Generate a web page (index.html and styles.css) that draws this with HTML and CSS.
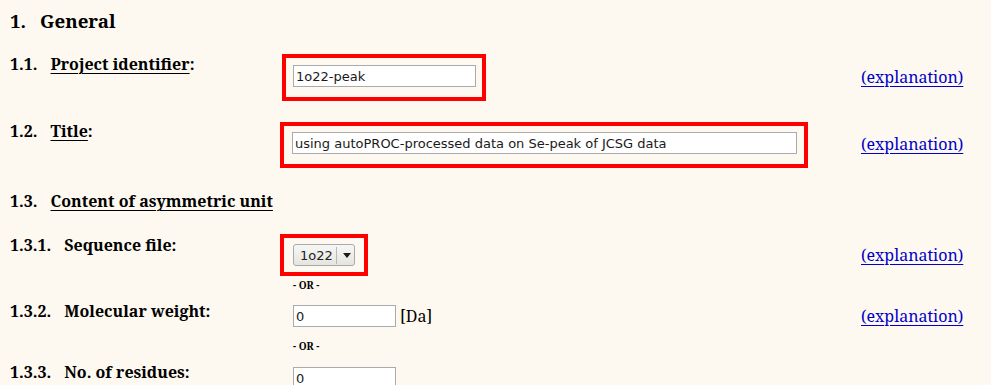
FILE: index.html
```html
<!DOCTYPE html>
<html lang="en">
<head>
<meta charset="utf-8">
<title>General</title>
<link rel="stylesheet" href="styles.css">
</head>
<body>
<h3 class="heading"><span class="num">1.</span><span>General</span></h3>

<div class="row r1">
  <div class="label"><span class="num">1.1.</span><span><u>Project identifier</u>:</span></div>
  <div class="value"><div class="box box1"><input class="field w183" type="text" value="1o22-peak"></div></div>
  <a class="expl" href="#">(explanation)</a>
</div>

<div class="row r2">
  <div class="label"><span class="num">1.2.</span><span><u>Title</u>:</span></div>
  <div class="value"><div class="box box2"><input class="field w505" type="text" value="using autoPROC-processed data on Se-peak of JCSG data"></div></div>
  <a class="expl" href="#">(explanation)</a>
</div>

<div class="row r3">
  <div class="label"><span class="num">1.3.</span><span><u>Content of asymmetric unit</u></span></div>
</div>

<div class="row r4">
  <div class="label"><span class="num">1.3.1.</span><span>Sequence file:</span></div>
  <div class="value">
    <div class="box box3">
      <div class="combo">
        <select class="combo-select"><option>1o22</option></select>
        <span class="combo-sep"></span>
        <span class="combo-arrow"></span>
      </div>
    </div>
  </div>
  <a class="expl" href="#">(explanation)</a>
</div>

<div class="row or1">
  <div></div>
  <div class="or">- OR -</div>
</div>

<div class="row r5">
  <div class="label"><span class="num">1.3.2.</span><span>Molecular weight:</span></div>
  <div class="value plain"><input class="field w103" type="text" value="0"><span class="unit">[Da]</span></div>
  <a class="expl" href="#">(explanation)</a>
</div>

<div class="row or2">
  <div></div>
  <div class="or">- OR -</div>
</div>

<div class="row r6">
  <div class="label"><span class="num">1.3.3.</span><span>No. of residues:</span></div>
  <div class="value plain"><input class="field w103" type="text" value="0"></div>
</div>
</body>
</html>
```
FILE: styles.css
```css
html, body {
  margin: 0;
  padding: 0;
}
body {
  background: #fdf9f0;
  color: #000;
  font-family: "Noto Serif", "DejaVu Serif", serif;
  font-size: 16px;
  padding-left: 10px;
  overflow: hidden;
  height: 385px;
}
.heading {
  margin: 0;
  padding-top: 9px;
  font-size: 18.72px;
  line-height: 24px;
  font-weight: bold;
  display: flex;
  gap: 14px;
}
.row {
  display: grid;
  grid-template-columns: 272px 579px max-content;
  align-items: start;
}
.label {
  font-weight: bold;
  line-height: 22px;
  display: flex;
  gap: 13px;
}
.label u {
  text-decoration: underline;
  text-decoration-thickness: 1px;
  text-underline-offset: 3px;
}
.expl {
  align-self: center;
  line-height: 22px;
  color: #0000c8;
  text-decoration: underline;
  text-decoration-thickness: 1px;
  text-underline-offset: 3px;
}
.r1 { margin-top: 20px; }
.r2 { margin-top: 19px; }
.r3 { margin-top: 22px; }
.r4 { margin-top: 22px; }
.or1 { margin-top: 3px; }
.r5 { margin-top: 8px; }
.or2 { margin-top: 8px; }
.r6 { margin-top: 8px; }

.box {
  display: inline-block;
  border: 4px solid #ff0000;
}
.box1 {
  margin-top: 1px;
  padding: 7px 6px 10px 7px;
}
.box2 {
  margin-top: 2px;
  margin-left: -2px;
  padding: 6px 7px 10px 8px;
}
.box3 {
  margin-left: -2px;
  padding: 6px 9px 6px 9px;
}
.box .field, .box .combo { display: block; }

.field {
  box-sizing: border-box;
  height: 22px;
  margin: 0;
  border: 1px solid #ababab;
  border-radius: 0;
  background: #fff;
  padding: 0 2px;
  font-family: "DejaVu Sans", sans-serif;
  font-size: 13px;
  color: #1a1a1a;
  outline: none;
}
.w183 { width: 183px; }
.w505 { width: 505px; }
.w103 { width: 103px; }

.plain {
  padding: 5px 0 5px 11px;
  display: flex;
  align-items: center;
}
.r6 .plain { padding-top: 6px; }
.unit {
  margin-left: 4px;
  line-height: 22px;
}

.combo {
  box-sizing: border-box;
  width: 62px;
  height: 22px;
  border: 1px solid #a9a9a9;
  border-radius: 3px;
  background: linear-gradient(#f7f7f5, #e4e4e0);
  display: flex !important;
  align-items: center;
}
.combo-select {
  appearance: none;
  -webkit-appearance: none;
  border: 0;
  background: transparent;
  margin: 0;
  padding: 0 2px 0 6px;
  font: 13px "DejaVu Sans", sans-serif;
  color: #222;
  width: 42px;
  outline: none;
}
.combo-sep {
  width: 1px;
  height: 17px;
  background: #b9b9b6;
}
.combo-arrow {
  margin-left: 6px;
  width: 0;
  height: 0;
  border-left: 4px solid transparent;
  border-right: 4px solid transparent;
  border-top: 5px solid #1a1a1a;
}

.or {
  padding-left: 11px;
  font-size: 10px;
  font-weight: bold;
  line-height: 13px;
}
```
